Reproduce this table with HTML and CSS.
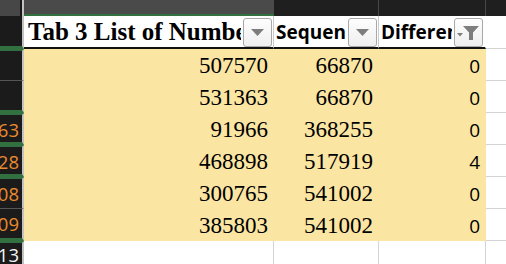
FILE: index.html
```html
<!DOCTYPE html>
<html>
<head>
<meta charset="utf-8">
<link rel="stylesheet" href="styles.css">
</head>
<body>
<div class="sheet">
  <!-- top band -->
  <div class="corner"></div>
  <div class="colhead sel"></div>
  <div class="colhead dark sep"></div>
  <div class="colhead dark sep"></div>
  <div class="colhead dark"></div>

  <!-- header row -->
  <div class="rh gb"></div>
  <div class="hcell c1">
    <span class="htext serif">Tab 3 List of Numbers</span>
    <span class="fbtn"><svg width="27" height="27" viewBox="0 0 27 27"><polygon points="7,10 20,10 13.5,17" fill="#7d7d7d"/></svg></span>
  </div>
  <div class="hcell c2">
    <span class="htext sans">Sequence</span>
    <span class="fbtn"><svg width="27" height="27" viewBox="0 0 27 27"><polygon points="7,10 20,10 13.5,17" fill="#7d7d7d"/></svg></span>
  </div>
  <div class="hcell c3">
    <span class="htext sans">Difference</span>
    <span class="fbtn f3"><svg width="27" height="27" viewBox="0 0 27 27"><polygon points="2,14 8,14 5,17.5" fill="#7d7d7d"/><path d="M8 7 H24 L18 13.5 V21 H14 V13.5 Z" fill="#7d7d7d"/></svg></span>
  </div>
  <div class="hcell c4"></div>

  <!-- data rows -->
  <div class="rh gt gy"></div>
  <div class="cell num serif">507570</div><div class="cell num serif">66870</div><div class="cell num sans d3">0</div><div class="cell c4w"></div>

  <div class="rh gb"></div>
  <div class="cell num serif">531363</div><div class="cell num serif">66870</div><div class="cell num sans d3">0</div><div class="cell c4w"></div>

  <div class="rh gt gb"><span class="rn">663</span></div>
  <div class="cell num serif">91966</div><div class="cell num serif">368255</div><div class="cell num sans d3">0</div><div class="cell c4w"></div>

  <div class="rh gt gb"><span class="rn">628</span></div>
  <div class="cell num serif">468898</div><div class="cell num serif">517919</div><div class="cell num sans d3">4</div><div class="cell c4w"></div>

  <div class="rh gt gy"><span class="rn">608</span></div>
  <div class="cell num serif">300765</div><div class="cell num serif">541002</div><div class="cell num sans d3">0</div><div class="cell c4w"></div>

  <div class="rh gb"><span class="rn">609</span></div>
  <div class="cell num serif">385803</div><div class="cell num serif">541002</div><div class="cell num sans d3">0</div><div class="cell c4w"></div>

  <!-- bottom empty row -->
  <div class="rh gt"><span class="rn white">613</span></div>
  <div class="ecell"></div><div class="ecell"></div><div class="ecell"></div><div class="ecell last"></div>
</div>
</body>
</html>
```

FILE: styles.css
```css
html, body {
  margin: 0;
  padding: 0;
  background: #ffffff;
  overflow: hidden;
}

.sheet {
  display: grid;
  grid-template-columns: 24px 250px 105px 107px 1fr;
  grid-template-rows: 16px 33px repeat(6, 32px) 1fr;
  width: 506px;
  height: 264px;
}

.sheet > div {
  box-sizing: border-box;
  min-width: 0;
}

.serif { font-family: "Liberation Serif", "Times New Roman", serif; }
.sans { font-family: "Open Sans", "DejaVu Sans", sans-serif; }

/* top band */
.corner {
  background: #474747;
  border-right: 2px solid #c2c2c2;
  box-shadow: inset -2px 0 0 #1a1a1a;
}
.colhead.sel {
  background: #4a4a4a;
  border-bottom: 2px solid #33703f;
}
.colhead.dark {
  background: #1f1f1f;
}
.colhead.sep {
  border-right: 1px solid #474747;
}

/* row header column */
.rh {
  background: #1b1b1b;
  border-right: 2px solid #c2c2c2;
  overflow: hidden;
  display: flex;
  justify-content: flex-end;
  align-items: flex-start;
  padding-right: 3px;
}
.rh.gb { border-bottom: 3px solid #33703f; }
.rh.gt { border-top: 2px solid #33703f; }
.rh.gy { border-bottom: 1px solid #555555; }

.rn {
  font-family: "Open Sans", "DejaVu Sans", sans-serif;
  font-size: 18.5px;
  line-height: 24px;
  color: #ea8a2f;
  padding-top: 3px;
  white-space: nowrap;
}
.rn.white { color: #f4f4f4; padding-top: 0; }

/* header row */
.hcell {
  background: #ffffff;
  display: flex;
  align-items: flex-start;
  border-bottom: 2px solid #121212;
  overflow: hidden;
}
.hcell.c1, .hcell.c2 { border-right: 1px solid #c9c9c9; }
.hcell.c3 { border-right: 1px solid #ffffff; }
.hcell.c4 {
  border-bottom: 1px solid #d4d4d4;
}

.htext {
  flex: 1;
  min-width: 0;
  overflow: hidden;
  white-space: nowrap;
  color: #000000;
  font-weight: bold;
  margin-right: 2px;
}
.htext.serif {
  font-size: 25px;
  line-height: 31px;
  padding-left: 4px;
}
.htext.sans {
  font-size: 19px;
  line-height: 31px;
  padding-left: 2px;
  padding-top: 1px;
}

.fbtn {
  flex: none;
  width: 29px;
  height: 29px;
  margin-top: 2px;
  margin-right: 1px;
  box-sizing: border-box;
  border: 1px solid #a8a8a8;
  border-radius: 3px;
  background: linear-gradient(#fdfdfd, #efefef);
  display: flex;
  align-items: center;
  justify-content: center;
}
.fbtn.f3 { margin-right: 2px; }
.fbtn svg { display: block; }

/* data cells */
.cell.num {
  background: #fbe5a3;
  text-align: right;
  color: #000000;
  white-space: nowrap;
  overflow: hidden;
}
.cell.num.serif {
  font-size: 23px;
  line-height: 30px;
  padding-top: 2px;
  padding-right: 6px;
}
.cell.num.d3 {
  font-size: 19px;
  line-height: 29px;
  padding-top: 3px;
  padding-right: 6px;
}
.cell.c4w {
  background: #ffffff;
  border-bottom: 1px solid #d4d4d4;
}

/* empty bottom row */
.ecell {
  background: #ffffff;
  border-right: 1px solid #d4d4d4;
}
.ecell.last {
  border-right: none;
}
```
